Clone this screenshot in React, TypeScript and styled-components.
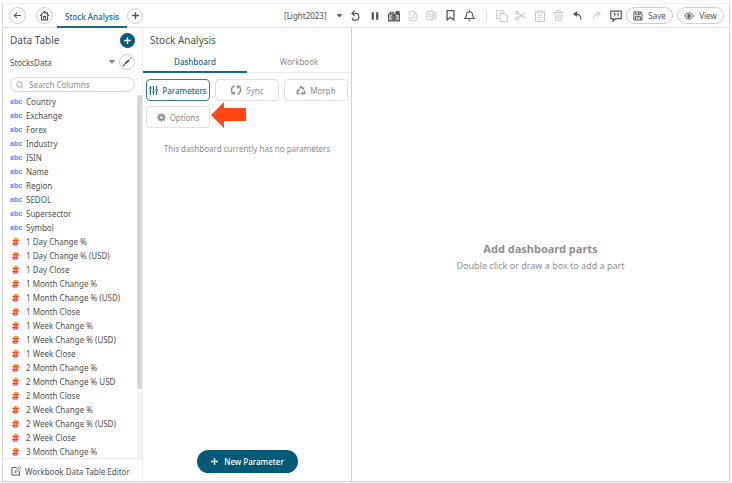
import React from 'react';
import styled, { createGlobalStyle, css } from 'styled-components';

const teal = '#005a78';
const tealText = '#1c6a84';
const grey = '#8c8c8c';
const ink = '#505050';

const GlobalStyle = createGlobalStyle`
  *, *::before, *::after { box-sizing: border-box; }
  html, body, #root { height: 100%; }
  body { margin: 0; background: #fff; }
  body, button, input, select { font-family: "Noto Sans", "Open Sans", sans-serif; color: ${ink}; }
  h1, h2, h3, p, ul { margin: 0; padding: 0; font-weight: 400; }
  button { padding: 0; border: 0; background: none; cursor: pointer; }
  svg { display: block; flex: none; }
`;

const Page = styled.div`
  height: 100vh;
  padding: 3px 2px 1px;
`;

const Frame = styled.div`
  height: 100%;
  display: flex;
  flex-direction: column;
  border: 1px solid #d4d4d4;
  border-top-color: #efefef;
  border-bottom-color: #cfcfcf;
`;

const Toolbar = styled.header`
  display: flex;
  align-items: stretch;
  flex: none;
  height: 24px;
  padding: 0 5px 0 6px;
  border-bottom: 1px solid #e2e2e2;
`;

const NavGroup = styled.nav`
  display: flex;
  align-items: center;
`;

const RoundButton = styled.button<{ $filled?: boolean; $size?: number }>`
  display: flex;
  align-items: center;
  justify-content: center;
  flex: none;
  width: ${p => p.$size ?? 17}px;
  height: ${p => p.$size ?? 17}px;
  border-radius: 50%;
  border: 1px solid ${p => (p.$filled ? teal : '#cdcdcd')};
  background: ${p => (p.$filled ? teal : '#fff')};
  color: ${p => (p.$filled ? '#fff' : ink)};
`;

const BackButton = styled(RoundButton)`
  margin-right: 10px;
`;

const PageTab = styled.a`
  display: flex;
  align-items: center;
  justify-content: center;
  align-self: stretch;
  width: 70px;
  margin: 0 0 -1px 4px;
  padding-top: 2px;
  border-bottom: 2px solid ${tealText};
  color: ${tealText};
  font-size: 8px;
  font-weight: 500;
  text-decoration: none;
  white-space: nowrap;
`;

const ToolGroup = styled.div`
  display: flex;
  align-items: center;
  margin-left: auto;
`;

const ThemePicker = styled.label`
  display: flex;
  align-items: center;
  margin-right: 3px;
`;

const ThemeSelect = styled.select`
  appearance: none;
  width: 52px;
  padding: 0;
  border: 0;
  background: none;
  font-size: 8px;
`;

const ToolButton = styled.button<{ $muted?: boolean }>`
  display: flex;
  align-items: center;
  justify-content: center;
  width: 19px;
  height: 19px;
  color: ${p => (p.$muted ? '#cccccc' : ink)};
`;

const Divider = styled.span`
  width: 1px;
  height: 12px;
  margin: 0 5px 0 7px;
  background: #e4e4e4;
`;

const Actions = styled.div`
  display: flex;
  gap: 4px;
  margin-left: 1px;
`;

const PillButton = styled.button`
  display: flex;
  align-items: center;
  justify-content: center;
  gap: 5px;
  width: 47px;
  height: 17px;
  border: 1px solid #cdcdcd;
  border-radius: 9px;
  font-size: 8px;
`;

const Body = styled.div`
  display: flex;
  flex: 1;
  min-height: 0;
`;

const Sidebar = styled.aside`
  display: flex;
  flex-direction: column;
  flex: none;
  width: 140px;
  border-right: 1px solid #ededed;
`;

const SidebarRow = styled.div`
  display: flex;
  align-items: center;
  justify-content: space-between;
  flex: none;
  height: 20px;
  padding: 0 7px;
`;

const SidebarHead = styled(SidebarRow)`
  height: 24px;
`;

const Title = styled.h2`
  font-size: 10px;
  line-height: 14px;
  font-weight: 400;
`;

const TableSelect = styled.select`
  appearance: none;
  flex: 1;
  padding: 0;
  border: 0;
  background: none;
  font-size: 8px;
`;

const EditGroup = styled.div`
  display: flex;
  align-items: center;
  gap: 3px;
`;

const SearchBox = styled.label`
  display: flex;
  align-items: center;
  gap: 5px;
  flex: none;
  height: 15px;
  margin: 5px 7px 3px;
  padding: 0 5px;
  border: 1px solid #d6d6d6;
  border-radius: 8px;
  color: ${grey};
`;

const SearchInput = styled.input`
  flex: 1;
  min-width: 0;
  padding: 0;
  border: 0;
  outline: 0;
  background: none;
  font-size: 8px;
  line-height: 12px;
  &::placeholder { color: ${grey}; opacity: 1; }
`;

const ListArea = styled.div`
  display: flex;
  flex: 1;
  min-height: 0;
  overflow: hidden;
`;

const ColumnList = styled.ul`
  flex: 1;
  min-width: 0;
  list-style: none;
`;

const ColumnRow = styled.li`
  display: flex;
  align-items: center;
  height: 14px;
  padding-left: 7px;
  font-size: 8px;
  line-height: 14px;
  white-space: nowrap;
`;

const TypeMark = styled.span`
  flex: none;
  width: 16px;
  color: #3d94f5;
  font-family: "Liberation Sans", Arial, sans-serif;
  font-size: 7px;
  line-height: 14px;
  font-weight: 700;
`;

const NumberMark = styled(TypeMark)`
  padding-left: 2px;
  color: #ff4713;
  font-family: "Noto Sans", sans-serif;
  font-size: 11px;
`;

const ScrollTrack = styled.div`
  flex: none;
  width: 5px;
  background: #f4f4f4;
`;

const ScrollThumb = styled.div`
  height: 81%;
  border-radius: 3px;
  background: #d6d6d6;
`;

const EditorLink = styled.a`
  display: flex;
  align-items: center;
  gap: 4px;
  flex: none;
  height: 23px;
  padding: 2px 8px 0;
  border-top: 1px solid #ececec;
  color: ${ink};
  font-size: 8px;
  text-decoration: none;
  white-space: nowrap;
`;

const Panel = styled.section`
  display: flex;
  flex-direction: column;
  flex: none;
  width: 209px;
  border-right: 1px solid #d0d0d0;
`;

const PanelHead = styled.div`
  display: flex;
  align-items: center;
  height: 24px;
  padding: 0 7px;
`;

const Tabs = styled.div`
  display: flex;
  height: 21px;
  border-bottom: 1px solid #ebebeb;
`;

const Tab = styled.button<{ $active?: boolean }>`
  flex: 1;
  margin-bottom: -1px;
  border-bottom: 2px solid transparent;
  font-size: 8px;
  color: ${grey};
  ${p => p.$active && css`
    color: ${tealText};
    font-weight: 500;
    border-bottom-color: ${tealText};
  `}
`;

const OptionGrid = styled.div`
  display: grid;
  grid-template-columns: repeat(3, 1fr);
  grid-auto-rows: 22px;
  gap: 5px;
  padding: 6px 3px 0 3px;
`;

const OptionButton = styled.button<{ $active?: boolean }>`
  display: flex;
  align-items: center;
  justify-content: center;
  gap: 4px;
  border: 1px solid ${p => (p.$active ? '#3b7d94' : '#e0e0e0')};
  border-radius: 4px;
  color: ${p => (p.$active ? tealText : grey)};
  font-size: 8px;
  font-weight: ${p => (p.$active ? 500 : 400)};
`;

const Pointer = styled.span`
  display: flex;
  align-items: center;
  margin: -4px 0 0 -4px;
`;

const Empty = styled.p`
  margin-top: 14px;
  color: ${grey};
  font-size: 8px;
  line-height: 14px;
  text-align: center;
`;

const NewButton = styled.button`
  display: flex;
  align-items: center;
  justify-content: center;
  gap: 5px;
  width: 101px;
  height: 23px;
  margin: auto auto 8px;
  border-radius: 12px;
  background: ${teal};
  color: #fff;
  font-size: 8px;
  font-weight: 500;
`;

const Canvas = styled.main`
  display: flex;
  flex: 1;
  flex-direction: column;
  align-items: center;
  justify-content: center;
  gap: 1px;
  padding-top: 5px;
  color: #909090;
`;

const CanvasTitle = styled.h3`
  font-size: 11px;
  line-height: 16px;
  font-weight: 700;
`;

const CanvasHint = styled.p`
  font-size: 9px;
  line-height: 16px;
`;

const art: Record<string, React.ReactNode> = {
  back: <path d="M14 8H2.500M7 3.500L2.500 8 7 12.500" strokeWidth="1.800" />,
  home: <><path d="M1.500 8.500L8 2l6.500 6.500M3.500 7v7.500h9V7M12 5.500V2.500" /><path d="M6.500 14v-4.500h3V14" /></>,
  plus: <path d="M8 2v12M2 8h12" strokeWidth="2.400" />,
  pencil: <><path d="M5 11l6.500-6.500" strokeWidth="2.800" /><path d="M1.500 14.500L4 12M13 3l1.500-1.500" strokeWidth="2" /></>,
  search: <><circle cx="7" cy="7" r="5.500" /><path d="M11 11l4 4" /></>,
  caret: <path d="M1 5h14l-7 7z" fill="currentColor" stroke="none" />,
  caretSoft: <path d="M1 4h14l-7 8z" fill="#8a8a8a" stroke="none" />,
  refresh: <><path d="M3.500 5h4.500a5 5 0 1 1-5 6" strokeWidth="1.700" /><path d="M7 1L3 5l4 4" strokeWidth="1.700" /></>,
  pause: <path d="M4.500 2v12M11.500 2v12" strokeWidth="3.600" />,
  camera: <><path d="M.8 5.500h14.400v9H.8zM3 5V3h4v2" /><path d="M10 1.500h5.500V6H10z" fill="currentColor" stroke="none" /><circle cx="8" cy="10" r="2.800" /><circle cx="8" cy="10" r="1" fill="currentColor" /><path d="M2 8h2.500M12 8h2M2.500 10.500h1.500M12 10.500h2M2.500 12.800h2M11.500 12.800h2" strokeWidth="1.200" /></>,
  pdf: <><path d="M2 1h8l4 4v10H2zM10 1v4h4" /><path d="M4.500 12.500C7 11 8 8 8 6c1 3 2 4 4 5-2-.5-5 0-7.500 1.500z" strokeWidth="1.200" /></>,
  excel: <><path d="M9 3h6v10H9M10 5.500h4M10 8h4M10 10.500h4M12 3v10" strokeWidth="1.100" /><path d="M1 3l8-2v14l-8-2z" /><path d="M3 5l4 6M7 5l-4 6" /></>,
  bookmark: <path d="M3 1h10v13.500L8 10.500l-5 4z" strokeWidth="1.800" />,
  bell: <><path d="M1 12.500h14c-2-2-2.500-3-2.500-5.500a4.500 4.500 0 0 0-9 0C3.500 9.500 3 10.500 1 12.500zM8 2.500V.5" /><path d="M6.500 14.800h3" /></>,
  copy: <><path d="M4.500 11.500H1V1h8.500v2.500" /><path d="M5.500 4.500h6l3.500 3.500v7.500H5.500z" /></>,
  cut: <><circle cx="3" cy="4" r="2" /><circle cx="3" cy="12" r="2" /><path d="M5 5l10 6.500M5 11l10-6.500" strokeWidth="1.800" /></>,
  paste: <><path d="M5 2.500H2v13h12v-13h-3M5.500 1h5v3h-5z" /><path d="M5 7.500h6M5 10h6M5 12.500h3" strokeWidth="1.200" /></>,
  trash: <><path d="M1 3.500h14M5.500 3V1h5v2M2.800 4l.7 11h9l.7-11" /><path d="M5.800 6v7M8 6v7M10.200 6v7" strokeWidth="1.200" /></>,
  undo: <><path d="M5 5.500c5-.3 9 3 9 9.500" strokeWidth="2.200" /><path d="M0 5.500L7 .5v10z" fill="currentColor" stroke="none" /></>,
  redo: <><path d="M13.500 5.500C7 5 3 8.500 2.500 15" strokeWidth="1.800" /><path d="M9.500 1l5 4.500-5 4.500" strokeWidth="1.800" /></>,
  comment: <><path d="M1 1.500h14v10H7.500L4 15v-3.500H1z" /><path d="M4.800 5h2.200v1.500L5.500 8.500M9.300 5h2.200v1.500L10 8.500" strokeWidth="1.300" /></>,
  save: <><path d="M1.500 1.500h11l2 2v11h-13z" /><path d="M4.500 2v4h7V2M4 14V9h8v5M6 11.500h4M9 2v3" /></>,
  eye: <><path d="M.8 8C3 4.500 5.500 3 8 3s5 1.500 7.200 5C13 11.500 10.500 13 8 13S3 11.500.8 8z" /><circle cx="8" cy="8" r="2.500" /><circle cx="8" cy="8" r="1" fill="currentColor" /></>,
  sliders: <><path d="M2.500 0v2M2.500 5v11M8 0v9M8 12v4M13.500 0v5M13.500 9v7" strokeWidth="2" /><path d="M.5 3.500h4M6 10.500h4M11.500 7h4" strokeWidth="2.600" /></>,
  sync: <><path d="M6 2.300A6.200 6.200 0 0 0 3.200 12M10 13.700A6.200 6.200 0 0 0 12.800 4" strokeWidth="1.900" /><path d="M1 14h5.500V9.200zM15 2H9.500v4.800z" fill="currentColor" stroke="none" /></>,
  morph: <><path d="M5.500 6L8 2l2.500 4M3.800 8L1.500 12.500 3 14h3M10 14h3l1.500-1.500-2-4" strokeWidth="2.200" /><path d="M8.500 7h4.500V2.500zM.5 8.500L5 6.500l1 4zM11 10.500v5.500l-3.500-2.500z" fill="currentColor" stroke="none" /></>,
  gear: <><circle cx="8" cy="8" r="4" strokeWidth="3.200" /><path d="M8 .3v3M8 12.700v3M.3 8h3M12.700 8h3M2.500 2.500l2 2M11.500 11.500l2 2M13.500 2.500l-2 2M4.500 11.500l-2 2" strokeWidth="2.600" /></>,
  edit: <><path d="M9 2.500H1.500v12h12V8" /><path d="M6 10.500l1-3L13.500 1l2 2L9 9.500z" strokeWidth="1.200" /></>,
};

const Icon = ({ name, size = 10 }: { name: string; size?: number }) => (
  <svg width={size} height={size} viewBox="0 0 16 16" fill="none" stroke="currentColor" strokeWidth="1.500" aria-hidden="true">
    {art[name]}
  </svg>
);

type Tool = { icon: string; label: string; muted?: boolean; size?: number };

const viewTools: Tool[] = [
  { icon: 'refresh', label: 'Refresh', size: 11 },
  { icon: 'pause', label: 'Pause' },
  { icon: 'camera', label: 'Snapshot', size: 12 },
  { icon: 'pdf', label: 'Export to PDF', muted: true },
  { icon: 'excel', label: 'Export to Excel', muted: true, size: 11 },
  { icon: 'bookmark', label: 'Bookmarks', size: 11 },
  { icon: 'bell', label: 'Alerts', size: 11 },
];

const editTools: Tool[] = [
  { icon: 'copy', label: 'Copy', muted: true, size: 12 },
  { icon: 'cut', label: 'Cut', muted: true, size: 11 },
  { icon: 'paste', label: 'Paste', muted: true, size: 12 },
  { icon: 'trash', label: 'Delete', muted: true, size: 11 },
  { icon: 'undo', label: 'Undo', size: 9 },
  { icon: 'redo', label: 'Redo', muted: true, size: 9 },
  { icon: 'comment', label: 'Comments', size: 12 },
];

const textColumns = ['Country', 'Exchange', 'Forex', 'Industry', 'ISIN', 'Name', 'Region', 'SEDOL', 'Supersector', 'Symbol'];

const numberColumns = [
  '1 Day Change %', '1 Day Change % (USD)', '1 Day Close',
  '1 Month Change %', '1 Month Change % (USD)', '1 Month Close',
  '1 Week Change %', '1 Week Change % (USD)', '1 Week Close',
  '2 Month Change %', '2 Month Change % USD', '2 Month Close',
  '2 Week Change %', '2 Week Change % (USD)', '2 Week Close',
  '3 Month Change %',
];

const Tools = ({ items }: { items: Tool[] }) => (
  <>
    {items.map(t => (
      <ToolButton key={t.icon} $muted={t.muted} aria-label={t.label}>
        <Icon name={t.icon} size={t.size} />
      </ToolButton>
    ))}
  </>
);

export default function App() {
  return (
    <>
      <GlobalStyle />
      <Page>
        <Frame>
          <Toolbar>
            <NavGroup>
              <BackButton aria-label="Back"><Icon name="back" size={9} /></BackButton>
              <RoundButton aria-label="Home"><Icon name="home" size={11} /></RoundButton>
              <PageTab href="#stock-analysis">Stock Analysis</PageTab>
              <RoundButton aria-label="Add dashboard" $size={16}><Icon name="plus" size={9} /></RoundButton>
            </NavGroup>
            <ToolGroup>
              <ThemePicker>
                <ThemeSelect aria-label="Theme" defaultValue="light">
                  <option value="light">[Light2023]</option>
                </ThemeSelect>
                <Icon name="caret" size={7} />
              </ThemePicker>
              <Tools items={viewTools} />
              <Divider />
              <Tools items={editTools} />
              <Actions>
                <PillButton><Icon name="save" size={10} />Save</PillButton>
                <PillButton><Icon name="eye" size={10} />View</PillButton>
              </Actions>
            </ToolGroup>
          </Toolbar>
          <Body>
            <Sidebar>
              <SidebarHead>
                <Title>Data Table</Title>
                <RoundButton aria-label="Add data table" $filled $size={15}><Icon name="plus" size={9} /></RoundButton>
              </SidebarHead>
              <SidebarRow>
                <TableSelect aria-label="Data table" defaultValue="stocks">
                  <option value="stocks">StocksData</option>
                </TableSelect>
                <EditGroup>
                  <Icon name="caretSoft" size={8} />
                  <RoundButton aria-label="Edit data table" $size={16}><Icon name="pencil" size={10} /></RoundButton>
                </EditGroup>
              </SidebarRow>
              <SearchBox>
                <Icon name="search" size={8} />
                <SearchInput aria-label="Search Columns" placeholder="Search Columns" />
              </SearchBox>
              <ListArea>
                <ColumnList>
                  {textColumns.map(c => (
                    <ColumnRow key={c}><TypeMark>abc</TypeMark>{c}</ColumnRow>
                  ))}
                  {numberColumns.map(c => (
                    <ColumnRow key={c}><NumberMark>#</NumberMark>{c}</ColumnRow>
                  ))}
                </ColumnList>
                <ScrollTrack><ScrollThumb /></ScrollTrack>
              </ListArea>
              <EditorLink href="#editor"><Icon name="edit" size={10} />Workbook Data Table Editor</EditorLink>
            </Sidebar>
            <Panel>
              <PanelHead><Title>Stock Analysis</Title></PanelHead>
              <Tabs role="tablist">
                <Tab role="tab" aria-selected $active>Dashboard</Tab>
                <Tab role="tab" aria-selected={false}>Workbook</Tab>
              </Tabs>
              <OptionGrid>
                <OptionButton $active><Icon name="sliders" size={9} />Parameters</OptionButton>
                <OptionButton><Icon name="sync" size={12} />Sync</OptionButton>
                <OptionButton><Icon name="morph" size={10} />Morph</OptionButton>
                <OptionButton><Icon name="gear" size={9} />Options</OptionButton>
                <Pointer>
                  <svg width="36" height="26" viewBox="0 0 36 26" aria-hidden="true">
                    <path d="M0 13L13 0v6h22v13H13v7z" fill="#ff4713" />
                  </svg>
                </Pointer>
              </OptionGrid>
              <Empty>This dashboard currently has no parameters</Empty>
              <NewButton><Icon name="plus" size={9} />New Parameter</NewButton>
            </Panel>
            <Canvas>
              <CanvasTitle>Add dashboard parts</CanvasTitle>
              <CanvasHint>Double click or draw a box to add a part</CanvasHint>
            </Canvas>
          </Body>
        </Frame>
      </Page>
    </>
  );
}
